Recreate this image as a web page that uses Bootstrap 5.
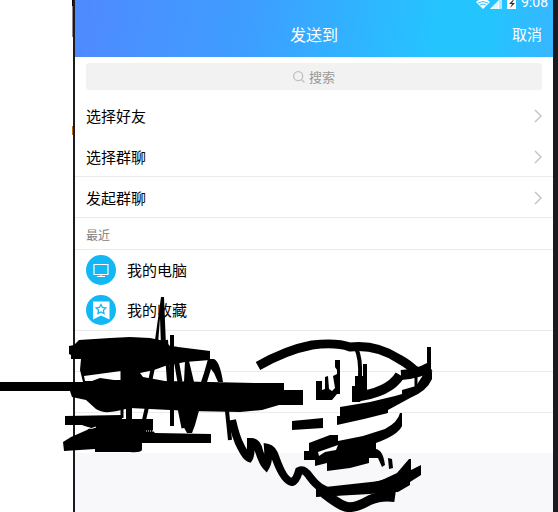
<!DOCTYPE html>
<html lang="zh-CN">
<head>
<meta charset="utf-8">
<meta name="viewport" content="width=device-width, initial-scale=1">
<title>发送到</title>
<link rel="stylesheet" href="https://cdn.jsdelivr.net/npm/bootstrap@5.3.0/dist/css/bootstrap.min.css">
<style>
body{font-family:"Noto Sans CJK SC",sans-serif;font-size:15px;line-height:20px;color:#000;background:#fff;overflow:hidden}
.edge{width:73px}
.edge i{width:1px;display:block}
.e1{height:6px;background:#000}.e2{height:31px;background:#888}.e3{height:89px}.e4{height:9px;background:#b87312}
.phone{border-left:2px solid #1a1b20;border-right:5px solid #1a1b20;background:#f8f8fb}
.top-bar{height:57px;background:linear-gradient(100deg,#5089ff 0%,#3d9fff 38%,#24c5ff 76%,#24c5ff 86%,#38b5ff 100%);color:#fff}
.status{font:14px/16px Roboto,sans-serif;height:10px;padding-right:5px;gap:4px}
.title-row{display:grid;grid-template-columns:1fr auto 1fr;padding:0 11px;margin-top:13px;line-height:22px}
.title-row h1{font-size:16px;line-height:22px}
.title-row button{font-size:15px;line-height:20px}
.search-area{padding:6px 11px 5px}
.search{height:27px;background:#f2f2f2;border-radius:3px;font-size:13px;color:#999}
.search input{width:26px;font-size:13px;line-height:20px;outline:0;color:#999}
.search input::placeholder{color:#999;opacity:1}
.line-row{height:41px;padding:0 11px;color:#000;border-bottom:1px solid #ebebed}
nav .line-row{padding-top:2px}
.bare{border-color:transparent}
.recent{font-size:12px;height:32px;padding:3px 11px 0;color:#808080;border-bottom:1px solid #ebebed}
.avatar{width:30px;height:30px;margin-right:11px}
.pinned{height:40px}
.scribble{pointer-events:none}
</style>
<script src="https://cdn.jsdelivr.net/npm/bootstrap@5.3.0/dist/js/bootstrap.bundle.min.js"></script>
</head>
<body>
<div class="d-flex min-vh-100 position-relative">
  <div class="edge flex-shrink-0 d-flex flex-column align-items-end" aria-hidden="true"><i class="e1"></i><i class="e2"></i><i class="e3"></i><i class="e4"></i></div>
  <main class="phone flex-grow-1">
    <header class="top-bar">
      <div class="status d-flex justify-content-end align-items-end">
        <svg width="41" height="10" viewBox="0 0 41 10" aria-hidden="true">
          <path d="M0 2Q7-4 14 2L7 9z" fill="#fff"/><path d="M2 3q5-3 10 0M4 5q3-2 6 0" fill="none" stroke="#40baff"/>
          <path d="M14 9L23 0V9z" fill="#fff"/><path d="M23 0h3v9h-3z" fill="#b0e8ff"/><path d="M18 4v5M21 2v7" stroke="#83d9ff" stroke-width=".5"/>
          <path d="M31 0h9v9h-9z" fill="#fff"/><path d="M37 0l-4 4h3l-2 4 5-5h-3l2-3z" fill="#333"/>
        </svg>
        <span>9:08</span>
      </div>
      <div class="title-row align-items-center">
        <span></span><h1 class="fw-normal m-0">发送到</h1>
        <button type="button" class="border-0 bg-transparent text-white p-0 text-end">取消</button>
      </div>
    </header>
    <div class="bg-white">
      <div class="search-area">
        <label class="search d-flex align-items-center justify-content-center gap-1">
          <svg width="12" height="12" viewBox="0 0 12 12" fill="none" stroke="#c0c0c4" stroke-width="1.3" aria-hidden="true"><circle cx="5.2" cy="5.2" r="4.5"/><path d="M8.5 8.5L11.5 11.5"/></svg>
          <input type="text" class="border-0 bg-transparent p-0" placeholder="搜索" aria-label="搜索">
        </label>
      </div>
      <nav>
        <a href="#" class="line-row bare d-flex align-items-center justify-content-between text-decoration-none">选择好友<svg width="8" height="14" viewBox="0 0 8 14" fill="none" stroke="#c2c2c4" stroke-width="1.4"><path d="M1 1l6 6-6 6"/></svg></a>
        <a href="#" class="line-row d-flex align-items-center justify-content-between text-decoration-none">选择群聊<svg width="8" height="14" viewBox="0 0 8 14" fill="none" stroke="#c2c2c4" stroke-width="1.4"><path d="M1 1l6 6-6 6"/></svg></a>
        <a href="#" class="line-row d-flex align-items-center justify-content-between text-decoration-none">发起群聊<svg width="8" height="14" viewBox="0 0 8 14" fill="none" stroke="#c2c2c4" stroke-width="1.4"><path d="M1 1l6 6-6 6"/></svg></a>
      </nav>
      <h2 class="recent d-flex align-items-center fw-normal m-0">最近</h2>
      <a href="#" class="line-row pinned bare d-flex align-items-center text-decoration-none">
        <svg class="avatar" viewBox="0 0 30 30"><circle cx="15" cy="15" r="15" fill="#12b7f5"/><path d="M8 9.5h14v10H8zM15 19.5v2M11 21.5h8" fill="none" stroke="#fff" stroke-width="1.2"/></svg>我的电脑</a>
      <a href="#" class="line-row d-flex align-items-center text-decoration-none">
        <svg class="avatar" viewBox="0 0 30 30"><circle cx="15" cy="15" r="15" fill="#12b7f5"/><path d="M7 6.500h16.500v18L15 20.500 7 24.500z" fill="#fff"/><path d="M15 9.500l1.500 3 3.300.5-2.400 2.300.6 3.300-3-1.600-3 1.600.6-3.300-2.400-2.300 3.300-.5z" fill="none" stroke="#12b7f5" stroke-width="1.3"/></svg>我的收藏</a>
      <div class="line-row"></div>
      <div class="line-row"></div>
      <div class="line-row pinned bare"></div>
    </div>
  </main>
  <svg class="scribble position-absolute top-0 start-0" width="558" height="512" viewBox="0 0 558 512" aria-hidden="true">
    <path d="M69 346L74 345 79 340 110 338 130 337 150 338 165 341 170 346 210 351V360L185 362 165 366 154 370 140 373 143 377 165 381 255 383H284V390H303V405H279L262 410 240 412 190 411 150 409 130 408 117 411Q103 414 96 409L86 400 72 397 70 391H0V382H83L80 370 81 359H71V355L69 354ZM84 376L121 371V380H114L100 378 92 381H85Z" fill-rule="evenodd"/>
    <path d="M65 416L122 415V419H153V431L155 433 211 434V443H142V450Q140 453 130 452H95V449L64 451 63 442 71 437 87 430 90 428 82 425H65Z"/>
    <path d="M86 427q6 3 10 0" fill="none" stroke="#fff"/>
    <path d="M146 431h8v-3" fill="none" stroke="#fff" stroke-dasharray="1 1"/>
    <g fill="none" stroke="#000" stroke-width="4">
      <path d="M122 368V418" stroke-width="3"/><path d="M129 365V420" stroke-width="6"/><path d="M147 407L144 420M150 382L154 362"/>
      <path d="M166 340L169 382M172 335V426"/><path d="M174 347L180 382M180 408L184 428" stroke-width="5"/>
    </g>
    <path d="M155 340L161 297H164L166 346H161L160 318 158 344ZM185 361H189L194 382H184ZM181 407H200L195 425 192 433H187L182 424Z"/>
    <path d="M208 359H214Q220 362 223 382H218L214 373 211 369 207 382H201L204 373Z"/>
    <g fill="none" stroke="#000" stroke-width="7">
      <path d="M227 411L230 440" stroke-width="4"/>
      <path d="M232 420Q236 438 241 447Q246 457 249 458Q251 455 251 442Q257 442 259 451Q263 463 266 466Q269 461 268 448Q273 449 276 459Q284 481 292 482Q296 481 299 471Q304 468 310 477Q320 491 333 492L371 487 400 479" stroke-width="8"/>
      <path d="M324 493Q338 504 344 506Q352 510 370 500Q381 495 395 497" stroke-width="10"/>
      <path d="M258 366Q286 350 312 345Q336 342 350 347Q376 344 399 359Q410 365 415 371" stroke-width="9"/>
      <path d="M356 348Q361 358 360 378" stroke-width="4"/>
      <path d="M365 364V392" stroke-width="4"/>
      <path d="M354 397Q389 393 400 375" stroke-width="10"/>
      <path d="M401 375Q418 374 430 367" stroke-width="10"/>
      <path d="M429 347V378" stroke-width="4"/>
      <path d="M416 366V390" stroke-width="3"/>
    </g>
    <path d="M425 372H432V379Q427 391 410 398L388 410V413L364 419 337 425V416H340V407L370 402 395 396 402 394V390L416 386Z"/>
    <path d="M397 473L409 459H411V470L421 465V475L410 482V485L398 492H390L370 494 316 497V488L380 481Z"/>
    <path d="M355 376H367V391L360 402H352V386H355Z"/>
    <path d="M316 381H322V390L325 389V377L328 376 329 389 332 391 335 388 333 376 337 374V370L335 367V360H340V394H337L332 400H316Z"/>
    <path d="M292 421L323 418V428L292 430Z"/>
    <path d="M304 451L309 451V443L330 435H338V441L363 436 385 429Q398 422 400 413H402V426Q398 435 376 443V449Q383 450 385 465L382 467 378 458H369V463L350 468 327 471V463L315 466V460H304ZM318 452L338 445 336 450 325 452 319 456Z" fill-rule="evenodd"/>
    <path d="M388 458L392 459 393 468 389 469Z"/>
  </svg>
</div>
</body>
</html>
